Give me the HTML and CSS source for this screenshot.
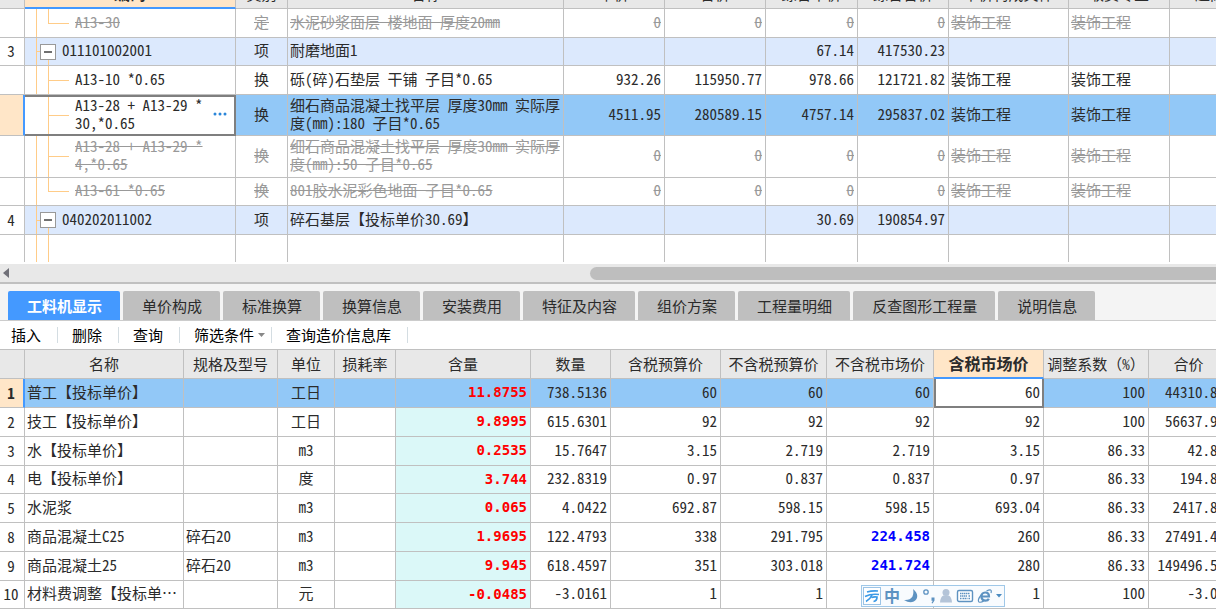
FILE: index.html
```html
<!DOCTYPE html>
<html lang="zh-CN">
<head>
<meta charset="utf-8">
<title>工料机显示</title>
<link rel="stylesheet" href="styles.css">
</head>
<body>
<main class="app">
<section class="pane pane-items">
<table class="grid items">
<colgroup><col class="w25"><col class="w211"><col class="w52"><col class="w276"><col class="w101"><col class="w101"><col class="w92"><col class="w91"><col class="w120"><col class="w101"><col class="w81"></colgroup>
<thead>
<tr><th></th><th class="current">编码</th><th>类别</th><th>名称</th><th>单价</th><th>合价</th><th>综合单价</th><th>综合合价</th><th>单价构成文件</th><th>取费专业</th><th>超高</th></tr>
</thead>
<tbody>
<tr class="void"><td class="no"></td><td class="code leaf last">A13-30</td><td class="mid">定</td><td>水泥砂浆面层 楼地面 厚度20mm</td><td class="num">0</td><td class="num">0</td><td class="num">0</td><td class="num">0</td><td>装饰工程</td><td>装饰工程</td><td></td></tr>
<tr class="section short"><td class="no">3</td><td class="code parent"><div class="node"><button class="fold" type="button" aria-label="折叠"><svg viewBox="0 0 16 16" width="16" height="16"><path d="M4 8h8" stroke="#333" stroke-width="1.4"/></svg></button><span>011101002001</span></div></td><td class="mid">项</td><td>耐磨地面1</td><td></td><td></td><td class="num">67.14</td><td class="num">417530.23</td><td></td><td></td><td></td></tr>
<tr><td class="no"></td><td class="code leaf">A13-10 *0.65</td><td class="mid">换</td><td>砾(碎)石垫层 干铺 子目*0.65</td><td class="num">932.26</td><td class="num">115950.77</td><td class="num">978.66</td><td class="num">121721.82</td><td>装饰工程</td><td>装饰工程</td><td></td></tr>
<tr class="selected tall"><td class="no"></td><td class="code leaf editing"><div class="editor"><textarea class="code-input" rows="2" aria-label="编码">A13-28 + A13-29 *
30,*0.65</textarea><button class="more" type="button" aria-label="更多"><svg viewBox="0 0 14 4" width="14" height="4" fill="#2b86d9"><circle cx="2" cy="2" r="1.5"/><circle cx="7" cy="2" r="1.5"/><circle cx="12" cy="2" r="1.5"/></svg></button></div></td><td class="mid">换</td><td>细石商品混凝土找平层 厚度30mm 实际厚<br>度(mm):180 子目*0.65</td><td class="num">4511.95</td><td class="num">280589.15</td><td class="num">4757.14</td><td class="num">295837.02</td><td>装饰工程</td><td>装饰工程</td><td></td></tr>
<tr class="void taller"><td class="no"></td><td class="code leaf">A13-28 + A13-29 *<br>4,*0.65</td><td class="mid">换</td><td>细石商品混凝土找平层 厚度30mm 实际厚<br>度(mm):50 子目*0.65</td><td class="num">0</td><td class="num">0</td><td class="num">0</td><td class="num">0</td><td>装饰工程</td><td>装饰工程</td><td></td></tr>
<tr class="void short"><td class="no"></td><td class="code leaf last">A13-61 *0.65</td><td class="mid">换</td><td>801胶水泥彩色地面 子目*0.65</td><td class="num">0</td><td class="num">0</td><td class="num">0</td><td class="num">0</td><td>装饰工程</td><td>装饰工程</td><td></td></tr>
<tr class="section"><td class="no">4</td><td class="code parent"><div class="node"><button class="fold" type="button" aria-label="折叠"><svg viewBox="0 0 16 16" width="16" height="16"><path d="M4 8h8" stroke="#333" stroke-width="1.4"/></svg></button><span>040202011002</span></div></td><td class="mid">项</td><td>碎石基层【投标单价30.69】</td><td></td><td></td><td class="num">30.69</td><td class="num">190854.97</td><td></td><td></td><td></td></tr>
<tr class="tail"><td class="no"></td><td class="code trunk"></td><td></td><td></td><td></td><td></td><td></td><td></td><td></td><td></td><td></td></tr>
</tbody>
</table>
</section>
<div class="scrollbar">
<button class="scroll-left" type="button" aria-label="向左滚动"><svg viewBox="0 0 6 10" width="6" height="10"><path d="M6 0v10L0 5z" fill="#707078"/></svg></button>
<div class="thumb"></div>
</div>
<nav class="tabs">
<button class="tab active" type="button">工料机显示</button>
<button class="tab" type="button">单价构成</button>
<button class="tab" type="button">标准换算</button>
<button class="tab" type="button">换算信息</button>
<button class="tab" type="button">安装费用</button>
<button class="tab" type="button">特征及内容</button>
<button class="tab" type="button">组价方案</button>
<button class="tab" type="button">工程量明细</button>
<button class="tab" type="button">反查图形工程量</button>
<button class="tab" type="button">说明信息</button>
</nav>
<div class="toolbar">
<button class="tool first" type="button">插入</button>
<button class="tool" type="button">删除</button>
<button class="tool" type="button">查询</button>
<button class="tool menu" type="button">筛选条件<svg viewBox="0 0 8 4" width="8" height="4"><path d="M0 0h7L3.500 4z" fill="#888"/></svg></button>
<button class="tool" type="button">查询造价信息库</button>
</div>
<section class="pane pane-resources">
<table class="grid resources">
<colgroup><col class="w25"><col class="w159"><col class="w94"><col class="w57"><col class="w61"><col class="w135"><col class="w80"><col class="w110"><col class="w106"><col class="w107"><col class="w110"><col class="w105"><col class="w80"></colgroup>
<thead>
<tr><th></th><th>名称</th><th>规格及型号</th><th>单位</th><th>损耗率</th><th>含量</th><th>数量</th><th>含税预算价</th><th>不含税预算价</th><th>不含税市场价</th><th class="current">含税市场价</th><th>调整系数<span class="full">（</span>%<span class="full">）</span></th><th>合价</th></tr>
</thead>
<tbody>
<tr class="selected"><td class="no">1</td><td>普工【投标单价】</td><td></td><td class="mid">工日</td><td></td><td class="num qty">11.8755</td><td class="num">738.5136</td><td class="num">60</td><td class="num">60</td><td class="num">60</td><td class="editing"><input class="price-input" type="text" value="60" aria-label="含税市场价"></td><td class="num">100</td><td class="num">44310.81</td></tr>
<tr><td class="no">2</td><td>技工【投标单价】</td><td></td><td class="mid">工日</td><td></td><td class="num qty">9.8995</td><td class="num">615.6301</td><td class="num">92</td><td class="num">92</td><td class="num">92</td><td class="num">92</td><td class="num">100</td><td class="num">56637.97</td></tr>
<tr><td class="no">3</td><td>水【投标单价】</td><td></td><td class="mid">m3</td><td></td><td class="num qty">0.2535</td><td class="num">15.7647</td><td class="num">3.15</td><td class="num">2.719</td><td class="num">2.719</td><td class="num">3.15</td><td class="num">86.33</td><td class="num">42.86</td></tr>
<tr><td class="no">4</td><td>电【投标单价】</td><td></td><td class="mid">度</td><td></td><td class="num qty">3.744</td><td class="num">232.8319</td><td class="num">0.97</td><td class="num">0.837</td><td class="num">0.837</td><td class="num">0.97</td><td class="num">86.33</td><td class="num">194.88</td></tr>
<tr><td class="no">5</td><td>水泥浆</td><td></td><td class="mid">m3</td><td></td><td class="num qty">0.065</td><td class="num">4.0422</td><td class="num">692.87</td><td class="num">598.15</td><td class="num">598.15</td><td class="num">693.04</td><td class="num">86.33</td><td class="num">2417.84</td></tr>
<tr><td class="no">8</td><td>商品混凝土C25</td><td>碎石20</td><td class="mid">m3</td><td></td><td class="num qty">1.9695</td><td class="num">122.4793</td><td class="num">338</td><td class="num">291.795</td><td class="num changed">224.458</td><td class="num">260</td><td class="num">86.33</td><td class="num">27491.46</td></tr>
<tr><td class="no">9</td><td>商品混凝土25</td><td>碎石20</td><td class="mid">m3</td><td></td><td class="num qty">9.945</td><td class="num">618.4597</td><td class="num">351</td><td class="num">303.018</td><td class="num changed">241.724</td><td class="num">280</td><td class="num">86.33</td><td class="num">149496.55</td></tr>
<tr><td class="no">10</td><td>材料费调整【投标单…</td><td></td><td class="mid">元</td><td></td><td class="num qty">-0.0485</td><td class="num">-3.0161</td><td class="num">1</td><td class="num">1</td><td class="num"></td><td class="num">1</td><td class="num">100</td><td class="num">-3.02</td></tr>
</tbody>
</table>
<div class="ime">
<svg viewBox="0 0 18 18" width="18" height="18"><rect x=".5" y=".5" width="17" height="17" fill="#fff" stroke="#9cc4e6"/><path d="M4 5Q9 3.500 15 4M2 9.500Q8 6.500 16 7.500M9 8Q7 12.500 3 14.500M8.500 10.500Q11 9.500 14 10Q14 14 10.500 14.500" fill="none" stroke="#3c9ae6" stroke-width="1.700"/></svg>
<span class="ime-mode">中</span>
<svg viewBox="0 0 16 16" width="16" height="16"><path d="M10 1Q16 6 13.500 11Q9 17 1 12Q7 12.500 9.500 8.500Q11 5 10 1z" fill="#5d92c1"/></svg>
<svg viewBox="0 0 14 16" width="14" height="16"><circle cx="4" cy="4" r="2.200" fill="none" stroke="#5d92c1" stroke-width="1.300"/><path d="M9.500 9.500h3v3L10.500 15.500 9.500 15l1.300-2.300H9.500z" fill="#5d92c1"/></svg>
<svg viewBox="0 0 14 16" width="14" height="16" fill="#b4c4d8"><circle cx="7" cy="4.500" r="3.500"/><path d="M4.500 7.500h5q3 1 3.500 7H1q.5-6 3.500-7z"/></svg>
<svg viewBox="0 0 18 16" width="18" height="16"><rect x="1.500" y="2.500" width="15" height="11" rx="1.500" fill="#fff" stroke="#5d92c1" stroke-width="1.400"/><path d="M4 5.500h10M4 8h7M4 10.500h1.500M6.500 10.500h5M12.500 10.500h1.500M12.500 8h1.500" stroke="#5d92c1" stroke-width="1.300" stroke-dasharray="1.500 .5"/></svg>
<svg viewBox="0 0 16 16" width="16" height="16" fill="none" stroke="#5d92c1"><path d="M4.500 8.500h7.500Q12 4.500 8.200 4.500T4.400 9Q5 12.700 8.500 12.700 11 12.700 11.800 10.800" stroke-width="2.200"/><path d="M9.500 3Q15.500 0 14 5M4.500 6.500Q0 12 2 14 4 14.800 7 12.800" stroke-width="1.200"/></svg>
<svg viewBox="0 0 7 4" width="7" height="4"><path d="M0 0h6L3 3.500z" fill="#4a8ac0"/></svg>
</div>
</section>
</main>
</body>
</html>
```
FILE: styles.css
```css
* {
  box-sizing: border-box;
}

body {
  margin: 0;
  background: #fff;
  color: #2b2b2b;
  font-family: "Noto Sans CJK SC", "Liberation Sans", sans-serif;
  font-size: 15px;
  line-height: 18px;
  font-feature-settings: "hwid";
  text-spacing-trim: space-all;
  overflow: hidden;
}

button,
input,
textarea {
  margin: 0;
  padding: 0;
  border: 0;
  background: none;
  color: inherit;
  font: inherit;
  font-feature-settings: inherit;
}

svg {
  display: block;
  flex: none;
}

.app {
  display: flex;
  flex-direction: column;
}

.pane {
  overflow: hidden;
  position: relative;
}

/* Grids */

.grid {
  table-layout: fixed;
  border-collapse: separate;
  border-spacing: 0;
  width: 1229px;
  min-width: 100%;
}

.w25 { width: 25px; }
.w52 { width: 52px; }
.w57 { width: 57px; }
.w61 { width: 61px; }
.w80 { width: 80px; }
.w81 { width: 81px; }
.w91 { width: 91px; }
.w92 { width: 92px; }
.w94 { width: 94px; }
.w101 { width: 101px; }
.w105 { width: 105px; }
.w106 { width: 106px; }
.w107 { width: 107px; }
.w110 { width: 110px; }
.w120 { width: 120px; }
.w135 { width: 135px; }
.w159 { width: 159px; }
.w211 { width: 211px; }
.w276 { width: 276px; }

.grid th,
.grid td {
  height: 29px;
  padding: 0 3px 3px 2px;
  border-right: 1px solid #c0c0c0;
  border-bottom: 1px solid #c0c0c0;
  white-space: nowrap;
  overflow: hidden;
  text-align: left;
  vertical-align: middle;
}

.grid th {
  padding: 0 0 1px;
  background: #e8e8e8;
  font-weight: normal;
  text-align: center;
}

.grid th.current {
  padding-bottom: 1px;
  background: #ffe6c8;
  border-bottom: 2px solid #4499ff;
  font-size: 16px;
  font-weight: bold;
}

.grid .no {
  padding: 0 2px 1px 0;
  text-align: center;
}

.grid .mid {
  padding: 0 0 3px;
  text-align: center;
}

.grid .num {
  text-align: right;
}

.full {
  font-feature-settings: normal;
}

.selected td {
  background: #92c8f7;
}

.grid .selected .no {
  padding-right: 1px;
  background: #ffe6c8;
  border-right: 2px solid #4499ff;
  font-weight: bold;
}

.short td {
  height: 28px;
}

.grid .tall td {
  height: 41px;
}

.grid .taller td {
  height: 42px;
}

.grid .tail td {
  height: 27px;
  border-bottom: 0;
}

.section td {
  background: #dce9fd;
}

.section .no {
  background: #fff;
}

.void td {
  color: #999;
  text-decoration: line-through;
}

.items {
  margin-top: -20px;
}

.pane-items {
  padding-bottom: 2px;
}

/* Tree column: guide lines are painted as backgrounds */

.grid .leaf {
  padding-left: 50px;
  background:
    linear-gradient(#ffcc88, #ffcc88) 11px 0 / 1px 100% no-repeat,
    linear-gradient(#ffcc88, #ffcc88) 23px 0 / 1px 100% no-repeat,
    linear-gradient(#ffcc88, #ffcc88) 23px 50% / 21px 1px no-repeat,
    #fff;
}

.grid .leaf.last {
  background-size: 1px 100%, 1px 50%, 21px 1px;
}

.grid .parent {
  padding: 0 0 0 15px;
  background:
    linear-gradient(#ffcc88, #ffcc88) 11px 0 / 1px 100% no-repeat,
    linear-gradient(#ffcc88, #ffcc88) 11px 50% / 5px 1px no-repeat,
    linear-gradient(#ffcc88, #ffcc88) 23px 100% / 1px 50% no-repeat,
    #dce9fd;
}

.grid .trunk {
  background:
    linear-gradient(#ffcc88, #ffcc88) 11px 0 / 1px 100% no-repeat,
    linear-gradient(#ffcc88, #ffcc88) 23px 0 / 1px 100% no-repeat;
}

.grid .code.editing {
  padding: 0 5px 2px 50px;
  background-size: 0 0, 1px 100%, 21px 1px;
  box-shadow: inset -1px 0 #7f7f7f, inset 0 2px #7f7f7f, inset 0 -1px #7f7f7f;
  border-color: #7f7f7f;
}

.node {
  display: flex;
  align-items: center;
  gap: 6px;
}

.node span {
  padding-bottom: 3px;
}

.fold {
  border: 1px solid #999;
  background: #fff;
  width: 16px;
  height: 16px;
}

.fold svg {
  margin: -1px;
}

.editor {
  display: flex;
  align-items: center;
}

.code-input {
  flex: 1;
  min-width: 0;
  height: 36px;
  resize: none;
  overflow: hidden;
  white-space: pre;
}

.more {
  width: 20px;
  height: 20px;
  display: flex;
  align-items: center;
  justify-content: center;
}

/* Scrollbar */

.scrollbar {
  display: flex;
  align-items: center;
  height: 20px;
  background: #e8e8e8;
  border-bottom: 2px solid #c0c0c0;
}

.scroll-left {
  padding: 0 3px;
}

.thumb {
  flex: 1;
  height: 13px;
  margin-left: 47.500%;
  border-radius: 7px 0 0 7px;
  background: #bebebe;
}

/* Tabs */

.tabs {
  display: flex;
  gap: 3px;
  padding: 7px 8px 0;
  background: #f4f4f4;
  border-bottom: 1px solid #ccc;
}

.tab {
  height: 29px;
  padding: 0 18px 0 19px;
  border-radius: 2px 2px 0 0;
  background: #bfbfbf;
}

.tab.active {
  background: #4499ff;
  color: #fff;
  font-weight: bold;
}

/* Toolbar */

.toolbar {
  display: flex;
  align-items: center;
  height: 29px;
  border-bottom: 1px solid #c0c0c0;
  color: #000;
}

.tool {
  display: flex;
  align-items: center;
  height: 16px;
  padding: 0 16px 0 14px;
  border-right: 1px solid #d4dde2;
}

.tool.first {
  padding-left: 11px;
}

.tool.menu {
  gap: 4px;
  padding-right: 5px;
}

/* Resource grid */

.resources tr:nth-child(4n) td {
  height: 28px;
}

.grid .qty,
.grid .changed {
  padding-bottom: 2px;
  font-family: "DejaVu Sans Mono", monospace;
  font-size: 14px;
  font-weight: bold;
}

.qty {
  background: #dbf8f8;
  color: #f00;
}

.selected .qty {
  background: #92c8f7;
}

.changed {
  color: #00f;
}

.grid.resources .editing {
  padding: 0;
  border: 0;
}

.price-input {
  display: block;
  width: 100%;
  height: 29px;
  padding: 0 2px 2px 0;
  border: 2px solid #7f7f7f;
  border-top: 0;
  background: #fff;
  text-align: right;
}

/* Input-method bar floating over the grid */

.ime {
  position: absolute;
  left: 861px;
  bottom: 2px;
  display: flex;
  align-items: center;
  gap: 3px;
  height: 22px;
  padding: 0 1px;
  border: 1px solid #a0c8e8;
  background: #f8fbfe;
}

.ime-mode {
  padding-bottom: 2px;
  color: #5d92c1;
  font-size: 16px;
  font-weight: bold;
}
```
